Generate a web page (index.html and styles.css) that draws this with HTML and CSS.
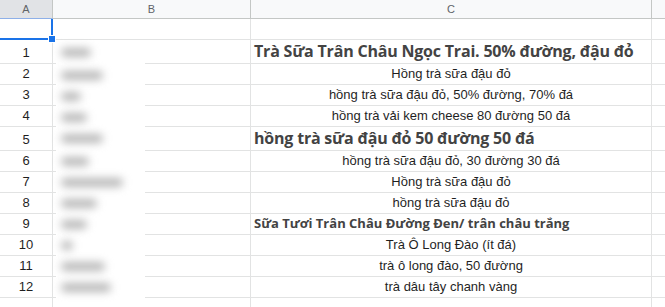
FILE: index.html
```html
<!DOCTYPE html>
<html lang="vi">
<head>
<meta charset="utf-8">
<link rel="stylesheet" href="styles.css">
</head>
<body>
<div class="sheet">
  <div class="grid">
    <div class="hd hd-a sel-col">A</div><div class="hd">B</div><div class="hd">C</div><div class="hd hd-d"></div>

    <div class="rn selcell"><span class="handle"></span></div><div class="c"></div><div class="c"></div><div class="c d"></div>

    <div class="rn">1</div><div class="c"></div><div class="c big">Trà Sữa Trân Châu Ngọc Trai. 50% đường, đậu đỏ</div><div class="c d"></div>
    <div class="rn">2</div><div class="c"></div><div class="c ctr">Hồng trà sữa đậu đỏ</div><div class="c d"></div>
    <div class="rn">3</div><div class="c"></div><div class="c ctr">hồng trà sữa đậu đỏ, 50% đường, 70% đá</div><div class="c d"></div>
    <div class="rn">4</div><div class="c"></div><div class="c ctr">hồng trà vải kem cheese 80 đường 50 đá</div><div class="c d"></div>
    <div class="rn">5</div><div class="c"></div><div class="c big">hồng trà sữa đậu đỏ 50 đường 50 đá</div><div class="c d"></div>
    <div class="rn">6</div><div class="c"></div><div class="c ctr">hồng trà sữa đậu đỏ, 30 đường 30 đá</div><div class="c d"></div>
    <div class="rn">7</div><div class="c"></div><div class="c ctr">Hồng trà sữa đậu đỏ</div><div class="c d"></div>
    <div class="rn">8</div><div class="c"></div><div class="c ctr">hồng trà sữa đậu đỏ</div><div class="c d"></div>
    <div class="rn">9</div><div class="c"></div><div class="c mid">Sữa Tươi Trân Châu Đường Đen/ trân châu trắng</div><div class="c d"></div>
    <div class="rn">10</div><div class="c"></div><div class="c ctr">Trà Ô Long Đào (ít đá)</div><div class="c d"></div>
    <div class="rn">11</div><div class="c"></div><div class="c ctr">trà ô long đào, 50 đường</div><div class="c d"></div>
    <div class="rn">12</div><div class="c"></div><div class="c ctr">trà dâu tây chanh vàng</div><div class="c d"></div>
    <div class="rn"></div><div class="c"></div><div class="c"></div><div class="c d"></div>
  </div>

  <div class="blur">
    <span class="blob r24" style="width:30px"></span>
    <span class="blob" style="width:42px"></span>
    <span class="blob" style="width:20px"></span>
    <span class="blob" style="width:26px"></span>
    <span class="blob r24" style="width:42px"></span>
    <span class="blob" style="width:28px"></span>
    <span class="blob" style="width:62px"></span>
    <span class="blob" style="width:36px"></span>
    <span class="blob" style="width:26px"></span>
    <span class="blob" style="width:12px"></span>
    <span class="blob" style="width:44px"></span>
    <span class="blob" style="width:50px"></span>
  </div>
</div>
</body>
</html>
```
FILE: styles.css
```css
html, body {
  margin: 0;
  padding: 0;
  background: #fff;
}
.sheet {
  position: relative;
  width: 665px;
  height: 307px;
  overflow: hidden;
  font-family: "Liberation Sans", Arial, sans-serif;
}
.grid {
  display: grid;
  grid-template-columns: 53px 198px 401px 14px;
  grid-template-rows: 19px 21px 24px 21px 21px 21px 24px 21px 21px 21px 21px 21px 21px 21px 20px;
}
.grid > div {
  box-sizing: border-box;
  border-right: 1px solid #e2e3e3;
  border-bottom: 1px solid #e2e3e3;
  white-space: nowrap;
  overflow: hidden;
}
.hd {
  background: #f8f9fa;
  border-right-color: #c4c7c5 !important;
  border-bottom-color: #c4c7c5 !important;
  color: #5f6368;
  font-size: 11px;
  display: flex;
  align-items: center;
  justify-content: center;
}
.hd-a {
  background: #e1e3e6;
  border-bottom-color: #8eb0e8 !important;
}
.rn {
  color: #1f1f1f;
  font-size: 13px;
  display: flex;
  align-items: flex-end;
  justify-content: center;
  padding-bottom: 3px;
}
.grid > .selcell {
  position: relative;
  overflow: visible;
  border-right: 0;
  border-bottom: 0;
  box-shadow: inset 0 -2px 0 #1a73e8, inset -2px 0 0 #1a73e8;
}
.handle {
  position: absolute;
  right: -3px;
  bottom: -3px;
  width: 6px;
  height: 6px;
  background: #1a73e8;
  border: 1px solid #fff;
  z-index: 2;
}
.c {
  font-size: 13px;
  color: #1f1f1f;
  display: flex;
  align-items: flex-end;
  padding-bottom: 3px;
}
.ctr {
  justify-content: center;
}
.big {
  font-family: "Open Sans", "Noto Sans", sans-serif;
  font-weight: 700;
  font-size: 16px;
  letter-spacing: -0.2px;
  color: #434343;
  padding-left: 3px;
  padding-bottom: 1px;
  line-height: 22px;
  overflow: visible !important;
}
.mid {
  font-family: "Open Sans", "Noto Sans", sans-serif;
  font-weight: 700;
  font-size: 13px;
  color: #434343;
  padding-left: 3px;
  padding-bottom: 2px;
}
.blur {
  position: absolute;
  left: 56px;
  top: 44px;
  width: 89px;
  height: 263px;
  background: #fff;
  display: flex;
  flex-direction: column;
}
.blob {
  display: block;
  height: 9px;
  margin: 4px 0 8px 5px;
  background: #b8b8b8;
  border-radius: 5px;
  filter: blur(4px);
}
.blob.r24 {
  margin-bottom: 10px;
}
```
